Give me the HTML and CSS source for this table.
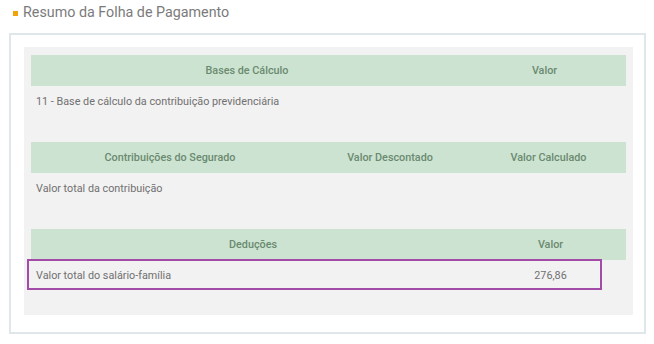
FILE: index.html
```html
<!DOCTYPE html>
<html lang="pt">
<head>
<meta charset="utf-8">
<link rel="stylesheet" href="styles.css">
</head>
<body>
<div class="title"><span class="bullet"></span>Resumo da Folha de Pagamento</div>
<div class="box">
  <div class="panel">
    <div class="tbl t1">
      <div class="th">Bases de Cálculo</div>
      <div class="th">Valor</div>
      <div class="td left">11 - Base de cálculo da contribuição previdenciária</div>
      <div class="td"></div>
    </div>
    <div class="tbl t2">
      <div class="th">Contribuições do Segurado</div>
      <div class="th">Valor Descontado</div>
      <div class="th">Valor Calculado</div>
      <div class="td left">Valor total da contribuição</div>
      <div class="td"></div>
      <div class="td"></div>
    </div>
    <div class="tbl t3">
      <div class="th">Deduções</div>
      <div class="th">Valor</div>
      <div class="td left">Valor total do salário-família</div>
      <div class="td">276,86</div>
      <div class="highlight"></div>
    </div>
  </div>
</div>
</body>
</html>
```

FILE: styles.css
```css
* { box-sizing: border-box; }
body {
  margin: 0;
  background: #ffffff;
  font-family: Roboto, "Liberation Sans", sans-serif;
}
.title {
  display: flex;
  align-items: center;
  height: 33px;
  padding: 0 0 10px 13px;
  font-size: 14.3px;
  color: #7b7b7b;
}
.bullet {
  width: 5px;
  height: 5px;
  background: #f0a30a;
  margin-right: 5px;
  margin-top: 4px;
}
.box {
  margin-left: 9px;
  width: 637px;
  height: 301px;
  border: 2px solid #dfe7ea;
  padding: 12px 11px 0 13px;
}
.panel {
  background: #f2f2f2;
  height: 268px;
  padding: 8px 7px 0 7px;
  display: flex;
  flex-direction: column;
  gap: 26px;
}
.tbl {
  display: grid;
  position: relative;
  font-size: 10.8px;
}
.t1 { grid-template-columns: 432px 1fr; }
.t2 { grid-template-columns: 278px 162px 1fr; }
.t3 { grid-template-columns: 444px 1fr; }
.th {
  background: #cde3d1;
  height: 31px;
  display: flex;
  align-items: center;
  justify-content: center;
  color: #6a8a70;
  font-weight: 500;
}
.td {
  height: 30px;
  display: flex;
  align-items: center;
  justify-content: center;
  color: #707070;
}
.td.left {
  justify-content: flex-start;
  padding-left: 5px;
}
.highlight {
  position: absolute;
  left: -4px;
  top: 30px;
  width: 575px;
  height: 31px;
  border: 2px solid #a24ca8;
}
```
